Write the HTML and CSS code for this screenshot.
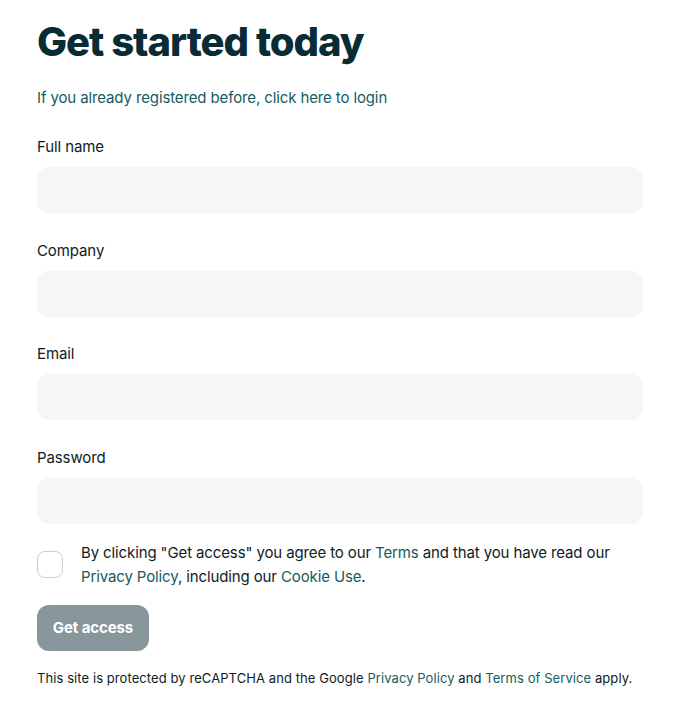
FILE: index.html
```html
<!DOCTYPE html>
<html lang="en">
<head>
<meta charset="utf-8">
<title>Get started today</title>
<link rel="stylesheet" href="styles.css">
</head>
<body>
<main class="signup">
  <h1 class="title">Get started today</h1>
  <p class="login-link"><a href="#">If you already registered before, click here to login</a></p>
  <form class="form">
    <div class="field">
      <label class="label" for="name">Full name</label>
      <input class="input" id="name" type="text">
    </div>
    <div class="field">
      <label class="label" for="company">Company</label>
      <input class="input" id="company" type="text">
    </div>
    <div class="field">
      <label class="label" for="email">Email</label>
      <input class="input" id="email" type="email">
    </div>
    <div class="field">
      <label class="label" for="password">Password</label>
      <input class="input" id="password" type="password">
    </div>
    <div class="consent">
      <span class="checkbox"></span>
      <p class="consent-text">By clicking "Get access" you agree to our <a href="#">Terms</a> and that you have read our <a href="#">Privacy Policy</a>, including our <a href="#">Cookie Use</a>.</p>
    </div>
    <button class="submit" type="button">Get access</button>
    <p class="recaptcha">This site is protected by reCAPTCHA and the Google <a href="#">Privacy Policy</a> and <a href="#">Terms of Service</a> apply.</p>
  </form>
</main>
</body>
</html>
```
FILE: styles.css
```css
* { box-sizing: border-box; }
body {
  margin: 0;
  background: #ffffff;
  font-family: Inter, Lato, sans-serif;
  color: #0e1b24;
}
a { color: #155b60; text-decoration: none; }
.signup {
  width: 606px;
  margin-left: 37px;
  padding-top: 18px;
}
.title {
  margin: 0;
  font-size: 40px;
  line-height: 48px;
  font-weight: 800;
  color: #082b36;
  letter-spacing: -1px;
}
.login-link {
  margin: 22px 0 0;
  font-size: 15px;
  line-height: 20px;
  letter-spacing: -0.12px;
}
.form { margin-top: 29px; }
.field {
  display: flex;
  flex-direction: column;
  gap: 10px;
  margin-bottom: 27.5px;
}
.label {
  font-size: 15px;
  line-height: 20px;
  letter-spacing: -0.1px;
}
.input {
  height: 46px;
  border: none;
  border-radius: 12px;
  background: #f6f6f6;
  width: 100%;
}
.consent {
  display: flex;
  align-items: flex-start;
  gap: 18px;
  margin-top: -10.5px;
}
.checkbox {
  flex: none;
  width: 26px;
  height: 27px;
  margin-top: 10px;
  border: 1px solid #c9cdd6;
  border-radius: 8px;
  background: #fff;
}
.consent-text {
  margin: 0;
  font-size: 15px;
  line-height: 24px;
  letter-spacing: -0.12px;
}
.submit {
  display: block;
  margin-top: 16px;
  width: 112px;
  height: 46px;
  border: none;
  border-radius: 12px;
  background: #87979b;
  color: #fff;
  font-family: inherit;
  font-size: 15px;
  font-weight: 700;
  letter-spacing: -0.1px;
}
.recaptcha {
  margin: 18px 0 0;
  font-size: 13px;
  line-height: 18px;
  letter-spacing: 0.08px;
}
```
